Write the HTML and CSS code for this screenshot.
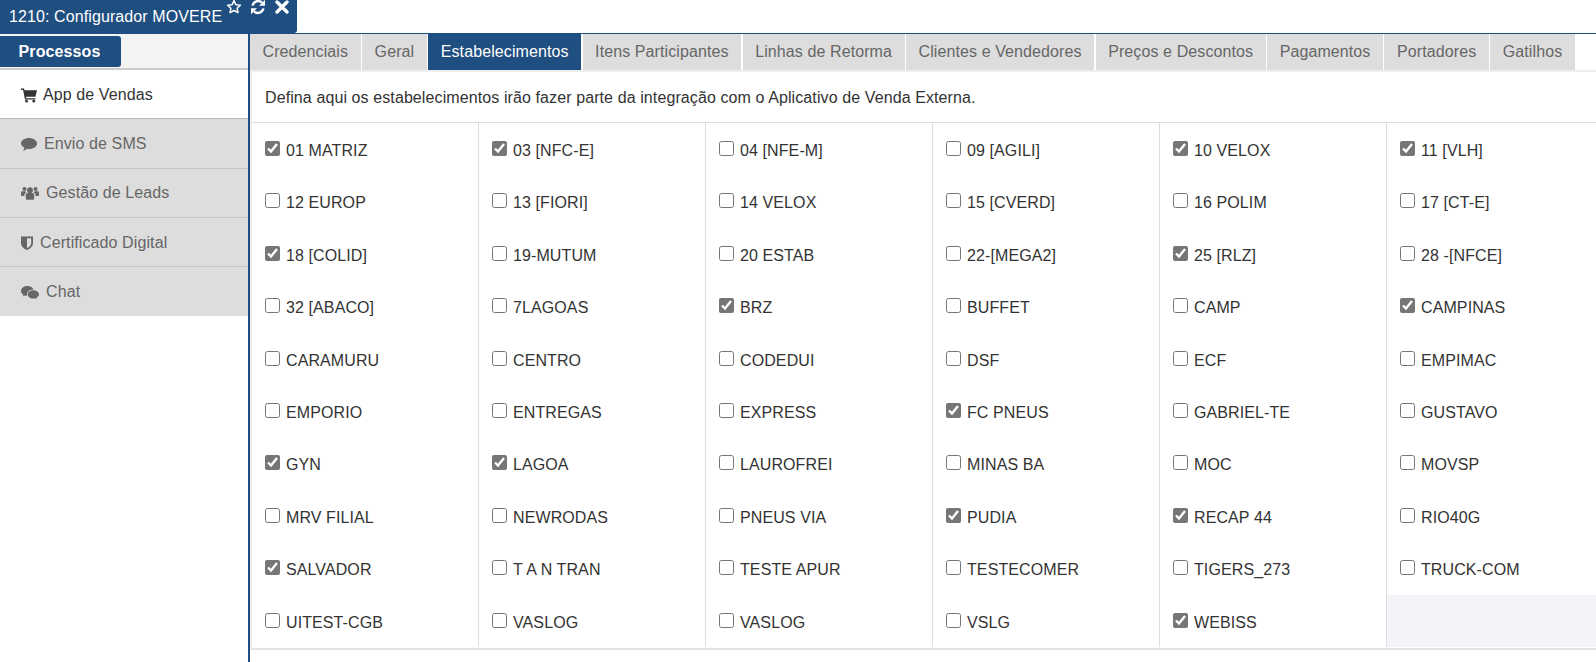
FILE: index.html
```html
<!DOCTYPE html>
<html lang="pt-BR">
<head>
<meta charset="utf-8">
<title>Configurador MOVERE</title>
<link rel="stylesheet" href="styles.css">
</head>
<body>
<header class="topbar">
  <div class="window-tab">
    <span class="window-title">1210: Configurador MOVERE</span>
    <span class="window-actions">
      <svg class="wa wa-star" viewBox="0 0 16 16"><path d="M8 1.600l1.900 4.100 4.500.5-3.300 3 .9 4.500L8 11.500l-4 2.200.9-4.500-3.300-3 4.500-.5z" fill="none" stroke="#fff" stroke-width="1.500" stroke-linejoin="round"/></svg>
      <svg class="wa wa-refresh" viewBox="0 0 16 16"><path d="M2.600 6.600A5.600 5.600 0 0 1 12 3.600" fill="none" stroke="#fff" stroke-width="2.400"/><path d="M15 .8v6h-6z" fill="#fff"/><path d="M13.400 9.400A5.600 5.600 0 0 1 4 12.400" fill="none" stroke="#fff" stroke-width="2.400"/><path d="M1 15.200v-6h6z" fill="#fff"/></svg>
      <svg class="wa wa-close" viewBox="0 0 16 16"><path d="M3 3l10 10M13 3L3 13" fill="none" stroke="#fff" stroke-width="3.400" stroke-linecap="round"/></svg>
    </span>
  </div>
</header>
<div class="layout">
  <aside class="sidebar">
    <div class="side-head"><button class="side-btn">Processos</button></div>
    <nav class="side-nav">
      <a class="side-item active"><svg class="ic" viewBox="0 0 16 16"><path d="M0 1.500h3l.5 1.700H16l-1.600 6.600H5l.3 1.400h9.200v1.400H4L2.100 2.900H0z" fill="currentColor"/><circle cx="5.500" cy="14.200" r="1.400" fill="currentColor"/><circle cx="12.800" cy="14.200" r="1.400" fill="currentColor"/></svg><span>App de Vendas</span></a>
      <a class="side-item"><svg class="ic" viewBox="0 0 16 16"><path d="M8 2c4.400 0 8 2.400 8 5.500S12.400 13 8 13c-.7 0-1.300 0-1.900-.2C5 13.800 3.600 14.500 1.800 14.700c1-1 1.500-1.900 1.600-3C1.300 10.700 0 9.200 0 7.500 0 4.400 3.600 2 8 2z" fill="currentColor"/></svg><span>Envio de SMS</span></a>
      <a class="side-item"><svg class="ic ic-wide" viewBox="0 0 18 16"><circle cx="9" cy="5.200" r="2.900" fill="currentColor"/><circle cx="3.500" cy="4" r="2" fill="currentColor"/><circle cx="14.500" cy="4" r="2" fill="currentColor"/><path d="M4.800 9.500c0-1 1-1.500 2-1.500h4.400c1 0 2 .5 2 1.500v4c0 .8-.6 1.300-1.500 1.300H6.300c-.9 0-1.500-.5-1.500-1.300z" fill="currentColor"/><path d="M0 7.500c0-.9.700-1.300 1.500-1.300h2.900c.2.700.6 1.200 1 1.500-1.300.3-2 1-2 2.200v1H1c-.7 0-1-.4-1-1zM18 7.500c0-.9-.7-1.300-1.500-1.300h-2.900c-.2.700-.6 1.200-1 1.500 1.300.3 2 1 2 2.200v1H17c.7 0 1-.4 1-1z" fill="currentColor"/></svg><span>Gestão de Leads</span></a>
      <a class="side-item"><svg class="ic ic-narrow" viewBox="0 0 12 16"><path fill-rule="evenodd" d="M0 1.500h12v6.500c0 3.500-3 5.800-6 7-3-1.200-6-3.500-6-7zM6 3.300v9.900c2-1 4.200-2.700 4.200-5.200V3.300z" fill="currentColor"/></svg><span>Certificado Digital</span></a>
      <a class="side-item"><svg class="ic ic-wide" viewBox="0 0 18 16"><path d="M6.500 2C3 2 0 4.100 0 6.900c0 1.600.9 2.800 2.400 3.800l-.6 1.900 2.200-1.200c.8.200 1.500.3 2.300.4-.1-.4-.2-.8-.2-1.200 0-2.800 2.700-5 6-5h.6C12 3.700 9.500 2 6.500 2z" fill="currentColor"/><path d="M12.300 6.200C9.400 6.200 6.900 8 6.900 10.400s2.500 4.200 5.400 4.200c.6 0 1.300-.1 1.900-.3l1.700 1-.5-1.600c1.500-.9 2.600-2 2.600-3.300 0-2.400-2.700-4.200-5.700-4.200z" fill="currentColor"/></svg><span>Chat</span></a>
    </nav>
  </aside>
  <main class="content">
    <nav class="tabs">
      <a class="tab">Credenciais</a>
      <a class="tab">Geral</a>
      <a class="tab tab-active">Estabelecimentos</a>
      <a class="tab">Itens Participantes</a>
      <a class="tab">Linhas de Retorma</a>
      <a class="tab">Clientes e Vendedores</a>
      <a class="tab">Preços e Descontos</a>
      <a class="tab">Pagamentos</a>
      <a class="tab">Portadores</a>
      <a class="tab">Gatilhos</a>
    </nav>
    <section class="panel">
      <p class="intro">Defina aqui os estabelecimentos irão fazer parte da integração com o Aplicativo de Venda Externa.</p>
      <div class="grid">
        <label class="cell"><input type="checkbox" checked><span>01 MATRIZ</span></label>
        <label class="cell"><input type="checkbox" checked><span>03 [NFC-E]</span></label>
        <label class="cell"><input type="checkbox"><span>04 [NFE-M]</span></label>
        <label class="cell"><input type="checkbox"><span>09 [AGILI]</span></label>
        <label class="cell"><input type="checkbox" checked><span>10 VELOX</span></label>
        <label class="cell"><input type="checkbox" checked><span>11 [VLH]</span></label>

        <label class="cell"><input type="checkbox"><span>12 EUROP</span></label>
        <label class="cell"><input type="checkbox"><span>13 [FIORI]</span></label>
        <label class="cell"><input type="checkbox"><span>14 VELOX</span></label>
        <label class="cell"><input type="checkbox"><span>15 [CVERD]</span></label>
        <label class="cell"><input type="checkbox"><span>16 POLIM</span></label>
        <label class="cell"><input type="checkbox"><span>17 [CT-E]</span></label>

        <label class="cell"><input type="checkbox" checked><span>18 [COLID]</span></label>
        <label class="cell"><input type="checkbox"><span>19-MUTUM</span></label>
        <label class="cell"><input type="checkbox"><span>20 ESTAB</span></label>
        <label class="cell"><input type="checkbox"><span>22-[MEGA2]</span></label>
        <label class="cell"><input type="checkbox" checked><span>25 [RLZ]</span></label>
        <label class="cell"><input type="checkbox"><span>28 -[NFCE]</span></label>

        <label class="cell"><input type="checkbox"><span>32 [ABACO]</span></label>
        <label class="cell"><input type="checkbox"><span>7LAGOAS</span></label>
        <label class="cell"><input type="checkbox" checked><span>BRZ</span></label>
        <label class="cell"><input type="checkbox"><span>BUFFET</span></label>
        <label class="cell"><input type="checkbox"><span>CAMP</span></label>
        <label class="cell"><input type="checkbox" checked><span>CAMPINAS</span></label>

        <label class="cell"><input type="checkbox"><span>CARAMURU</span></label>
        <label class="cell"><input type="checkbox"><span>CENTRO</span></label>
        <label class="cell"><input type="checkbox"><span>CODEDUI</span></label>
        <label class="cell"><input type="checkbox"><span>DSF</span></label>
        <label class="cell"><input type="checkbox"><span>ECF</span></label>
        <label class="cell"><input type="checkbox"><span>EMPIMAC</span></label>

        <label class="cell"><input type="checkbox"><span>EMPORIO</span></label>
        <label class="cell"><input type="checkbox"><span>ENTREGAS</span></label>
        <label class="cell"><input type="checkbox"><span>EXPRESS</span></label>
        <label class="cell"><input type="checkbox" checked><span>FC PNEUS</span></label>
        <label class="cell"><input type="checkbox"><span>GABRIEL-TE</span></label>
        <label class="cell"><input type="checkbox"><span>GUSTAVO</span></label>

        <label class="cell"><input type="checkbox" checked><span>GYN</span></label>
        <label class="cell"><input type="checkbox" checked><span>LAGOA</span></label>
        <label class="cell"><input type="checkbox"><span>LAUROFREI</span></label>
        <label class="cell"><input type="checkbox"><span>MINAS BA</span></label>
        <label class="cell"><input type="checkbox"><span>MOC</span></label>
        <label class="cell"><input type="checkbox"><span>MOVSP</span></label>

        <label class="cell"><input type="checkbox"><span>MRV FILIAL</span></label>
        <label class="cell"><input type="checkbox"><span>NEWRODAS</span></label>
        <label class="cell"><input type="checkbox"><span>PNEUS VIA</span></label>
        <label class="cell"><input type="checkbox" checked><span>PUDIA</span></label>
        <label class="cell"><input type="checkbox" checked><span>RECAP 44</span></label>
        <label class="cell"><input type="checkbox"><span>RIO40G</span></label>

        <label class="cell"><input type="checkbox" checked><span>SALVADOR</span></label>
        <label class="cell"><input type="checkbox"><span>T A N TRAN</span></label>
        <label class="cell"><input type="checkbox"><span>TESTE APUR</span></label>
        <label class="cell"><input type="checkbox"><span>TESTECOMER</span></label>
        <label class="cell"><input type="checkbox"><span>TIGERS_273</span></label>
        <label class="cell"><input type="checkbox"><span>TRUCK-COM</span></label>

        <label class="cell"><input type="checkbox"><span>UITEST-CGB</span></label>
        <label class="cell"><input type="checkbox"><span>VASLOG</span></label>
        <label class="cell"><input type="checkbox"><span>VASLOG</span></label>
        <label class="cell"><input type="checkbox"><span>VSLG</span></label>
        <label class="cell"><input type="checkbox" checked><span>WEBISS</span></label>
      </div>
    </section>
  </main>
</div>
</body>
</html>
```
FILE: styles.css
```css
* { box-sizing: border-box; }
html, body { margin: 0; height: 100%; }
body {
  font-family: "Liberation Sans", Arial, sans-serif;
  font-size: 16px;
  letter-spacing: .1px;
  color: #333;
  background: #fff;
  overflow: hidden;
  display: flex;
  flex-direction: column;
}
.topbar { height: 33px; flex: none; display: flex; }
.window-tab {
  width: 297px;
  height: 33px;
  background: #1f4e80;
  color: #fff;
  border-bottom-right-radius: 3px;
  display: flex;
  padding-left: 9px;
}
.window-title { line-height: 33px; white-space: nowrap; }
.window-actions { display: flex; gap: 8px; margin-left: 4px; align-items: flex-start; }
.wa { width: 16px; height: 16px; display: block; margin-top: -1px; }

.layout { flex: 1; display: flex; min-height: 0; }
.sidebar {
  width: 250px;
  flex: none;
  border-right: 2px solid #1f4e80;
  border-top: 1px solid #1f4e80;
}
.side-head {
  height: 36px;
  background: #f3f3f3;
  border-bottom: 2px solid #ccc;
  padding-top: 2px;
}
.side-btn {
  display: block;
  width: 121px;
  height: 31px;
  border: 0;
  border-radius: 0 3px 3px 0;
  background: #1f4e80;
  color: #fff;
  font: bold 16px "Liberation Sans", Arial, sans-serif;
  letter-spacing: .1px;
  padding: 0 2px 0 0;
}
.side-nav { width: 248px; background: #fff; }
.side-item {
  display: flex;
  align-items: center;
  gap: 7px;
  height: 49.300px;
  padding: 1px 0 0 21px;
  background: #ddd;
  color: #666;
  border-bottom: 1px solid #c4c4c4;
}
.side-item:last-child { border-bottom: 0; }
.side-item.active { background: #fff; color: #333; border-bottom-color: #bbb; gap: 6px; }
.ic { width: 16px; height: 16px; flex: none; }
.ic-wide { width: 18px; }
.ic-narrow { width: 12px; }

.content {
  flex: 1;
  min-width: 0;
  border-top: 1px solid #1f4e80;
  display: flex;
  flex-direction: column;
  overflow: hidden;
}
.tabs {
  display: flex;
  gap: 1.500px;
  height: 36px;
  flex: none;
}
.tab {
  background: #ddd;
  color: #666;
  padding: 0 12.500px;
  line-height: 36px;
  white-space: nowrap;
}
.tab-active { background: #1f4e80; color: #fff; }
.panel {
  flex: none;
  border-top: 2px solid #eee;
  border-left: 2px solid #eee;
  border-bottom: 2px solid #e4e4e4;
}
.intro {
  margin: 0;
  height: 51px;
  padding: 17px 13px 0;
  line-height: 18px;
  color: #333;
  border-bottom: 1px solid #ddd;
  white-space: nowrap;
}
.grid {
  display: grid;
  grid-template-columns: repeat(6, 227px);
  grid-auto-rows: 52.400px;
  width: 1362px;
  margin-bottom: 1px;
  background: #f3f4f8;
}
.cell {
  background: #fff;
  border-right: 1px solid #ddd;
  display: flex;
  align-items: flex-start;
  padding: 18px 0 0 13px;
  line-height: 20px;
  color: #333;
  white-space: nowrap;
}
.cell input {
  width: 15px;
  height: 15px;
  margin: 0 6px 0 0;
  accent-color: #767676;
  flex: none;
}
```
